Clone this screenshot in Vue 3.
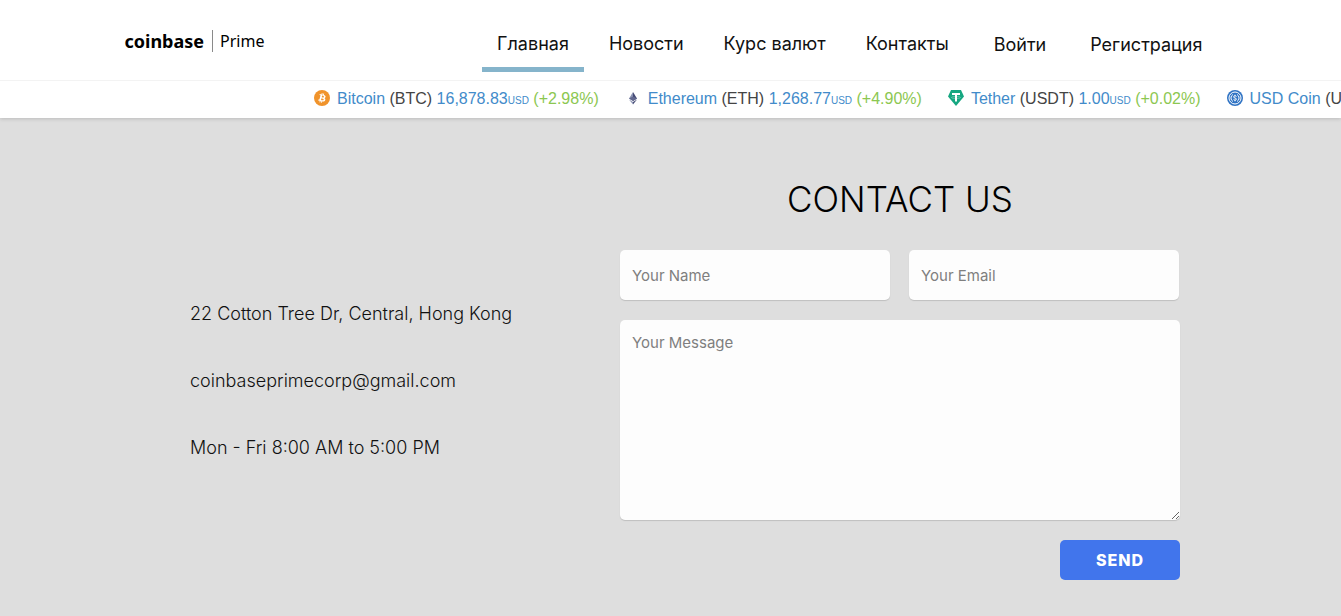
<script setup>
import { ref } from 'vue'

const links = [
  { label: 'Главная', active: true },
  { label: 'Новости' },
  { label: 'Курс валют' },
  { label: 'Контакты' },
]
const accountLinks = ['Войти', 'Регистрация']

const coins = [
  { id: 'btc', name: 'Bitcoin', code: 'BTC', price: '16,878.83', change: '+2.98%' },
  { id: 'eth', name: 'Ethereum', code: 'ETH', price: '1,268.77', change: '+4.90%' },
  { id: 'usdt', name: 'Tether', code: 'USDT', price: '1.00', change: '+0.02%' },
  { id: 'usdc', name: 'USD Coin', code: 'USDC', price: '1.00', change: '+0.01%' },
]

const name = ref('')
const email = ref('')
const message = ref('')
</script>

<template>
  <div class="page">
    <header class="header">
      <div class="bar">
        <a class="logo" href="#"><span class="brand">coinbase</span><span class="product">Prime</span></a>
        <nav class="nav">
          <a v-for="l in links" :key="l.label" href="#" class="link" :class="{ active: l.active }">{{ l.label }}</a>
          <div class="account">
            <a v-for="l in accountLinks" :key="l" href="#" class="account-link">{{ l }}</a>
          </div>
        </nav>
      </div>
      <div class="ticker">
        <div v-for="c in coins" :key="c.id" class="coin">
          <svg class="icon" viewBox="0 0 32 32" aria-hidden="true">
            <template v-if="c.id === 'btc'">
              <circle cx="16" cy="16" r="16" fill="#f0932b" />
              <path fill="#fff" d="M23.2 14c.3-2.1-1.3-3.2-3.5-4l.7-2.8-1.7-.4-.7 2.7-1.4-.3.7-2.8-1.700-.4-.7 2.8-3.5-.9-.5 1.8s1.3.3 1.2.3c.7.2.8.6.8 1l-1.9 7.7c-.1.2-.3.5-.8.4l-1.2-.3-.9 2 3.4.8-.7 2.9 1.7.4.7-2.8 1.4.3-.7 2.8 1.7.4.7-2.8c3 .6 5.2.3 6.1-2.3.8-2.1 0-3.3-1.5-4.1 1.1-.3 1.9-1 2.1-2.4zm-3.9 5.400c-.5 2.100-4.100 1-5.300.7l.9-3.800c1.200.3 5 .9 4.400 3.100zm.5-5.500c-.5 1.900-3.500.9-4.400.7l.9-3.400c1 .2 4.100.7 3.500 2.700z" />
            </template>
            <template v-else-if="c.id === 'eth'">
              <path fill="#8a92b2" d="M16 4 8 17l8 5z" />
              <path fill="#454a75" d="m16 4 8 13-8 5z" />
              <path fill="#62688f" d="m16 13-8 4 8 5 8-5z" />
              <path fill="#8a92b2" d="m8 19 8 10v-5z" />
              <path fill="#454a75" d="m24 19-8 10v-5z" />
            </template>
            <template v-else-if="c.id === 'usdt'">
              <path fill="#16a781" d="M6 0h20l6 13-16 19L0 13z" />
              <path fill="#fff" d="M8 6h16v4h-6v13h-4V10H8z" />
              <ellipse cx="16" cy="15" rx="9" ry="2" fill="none" stroke="#fff" stroke-opacity=".6" stroke-width="1" />
            </template>
            <template v-else>
              <circle cx="16" cy="16" r="16" fill="#2f73c4" />
              <circle cx="16" cy="16" r="12" fill="none" stroke="#fff" stroke-width="2" />
              <g fill="none" stroke="#fff" stroke-width="2">
                <path d="M12 9a8 8 0 0 0 0 14M20 9a8 8 0 0 1 0 14" />
                <path d="M19 13c-.5-1.5-6-2-6 .8s6 1.6 6 4.400-5.500 2.300-6 .5M16 9.500V12M16 20v2.500" />
              </g>
            </template>
          </svg>
          <div><a href="#" class="coin-name">{{ c.name }}</a> ({{ c.code }}) <span class="price">{{ c.price }}<span class="unit">USD</span></span> <span class="change">({{ c.change }})</span></div>
        </div>
      </div>
    </header>

    <main class="contact">
      <address class="info">
        <p>22 Cotton Tree Dr, Central, Hong Kong</p>
        <p>coinbaseprimecorp@gmail.com</p>
        <p>Mon - Fri 8:00 AM to 5:00 PM</p>
      </address>
      <form class="form" @submit.prevent>
        <h1>CONTACT US</h1>
        <div class="fields">
          <input v-model="name" type="text" placeholder="Your Name" aria-label="Your Name" />
          <input v-model="email" type="email" placeholder="Your Email" aria-label="Your Email" />
        </div>
        <textarea v-model="message" placeholder="Your Message" aria-label="Your Message"></textarea>
        <button type="submit">SEND</button>
      </form>
    </main>
  </div>
</template>

<style>
body {
  background: #dedede;
  overflow-x: hidden;
}
</style>

<style scoped>
.page {
  font-family: Inter, "Liberation Sans", sans-serif;
  color: #111;
  overflow: hidden;
}
a {
  color: inherit;
  text-decoration: none;
}
.header {
  background: #fff;
  box-shadow: 0 1px 4px rgba(0, 0, 0, 0.16);
}
.bar {
  max-width: 1092px;
  height: 80px;
  margin: 0 auto;
  display: flex;
  justify-content: space-between;
}
.logo {
  display: flex;
  align-items: center;
  height: 82px;
  color: #000;
  font-family: "Noto Sans", sans-serif;
}
.brand {
  font-size: 18px;
  font-weight: 700;
  line-height: 22px;
  padding-right: 8px;
  border-right: 1px solid #8a8a8a;
}
.product {
  font-size: 16px;
  padding-left: 7px;
}
.nav {
  display: flex;
  align-items: flex-start;
  gap: 10px;
  padding-top: 16px;
  font-size: 18px;
  line-height: 56px;
  white-space: nowrap;
}
.link {
  height: 51px;
  padding: 0 15px;
  border-bottom: 5px solid transparent;
}
.link.active {
  border-bottom-color: #85b4cb;
}
.account {
  display: flex;
  gap: 44px;
  padding: 1px 14px 0 20px;
}
.ticker {
  display: flex;
  gap: 26px;
  height: 37px;
  padding-left: 314px;
  border-top: 1px solid #f3f3f3;
  font-family: "Liberation Sans", Arial, sans-serif;
  font-size: 16px;
  line-height: 35px;
  color: #444;
  white-space: nowrap;
  overflow: hidden;
}
.coin {
  display: flex;
  align-items: flex-start;
  gap: 7px;
  flex: none;
}
.icon {
  width: 16px;
  height: 16px;
  margin-top: 9px;
}
.coin-name,
.price {
  color: #428bca;
}
.unit {
  font-size: 10px;
}
.change {
  color: #8cc751;
}
.contact {
  display: grid;
  grid-template-columns: 430px 560px;
  justify-content: center;
  align-items: center;
  padding: 54px 0 36px 29px;
}
.info {
  padding-top: 8px;
  font-style: normal;
  font-size: 18px;
  font-weight: 300;
  line-height: 27px;
}
.info p {
  margin: 0 0 40px;
}
.info p:last-child {
  margin-bottom: 0;
}
.form {
  display: flex;
  flex-direction: column;
}
h1 {
  margin: 0 0 24px;
  font-size: 35px;
  font-weight: 300;
  line-height: 54px;
  text-align: center;
  color: #000;
}
.fields {
  display: grid;
  grid-template-columns: 1fr 1fr;
  gap: 19px;
  margin-bottom: 20px;
  padding-right: 1px;
}
input,
textarea {
  box-sizing: border-box;
  width: 100%;
  margin: 0;
  border: 0;
  border-radius: 5px;
  background: #fdfdfd;
  box-shadow: 0 1px 1px rgba(0, 0, 0, 0.14);
  font-family: inherit;
  font-size: 15px;
  color: #333;
}
input {
  height: 50px;
  padding: 0 12px;
}
textarea {
  height: 200px;
  padding: 13px 12px;
  line-height: 20px;
  resize: both;
}
::placeholder {
  color: #7f7f7f;
}
button {
  align-self: flex-end;
  width: 120px;
  height: 40px;
  margin-top: 20px;
  border: 0;
  border-radius: 5px;
  background: #4175ec;
  color: #fff;
  font-family: inherit;
  font-size: 16px;
  font-weight: 800;
  letter-spacing: 1px;
}
</style>
